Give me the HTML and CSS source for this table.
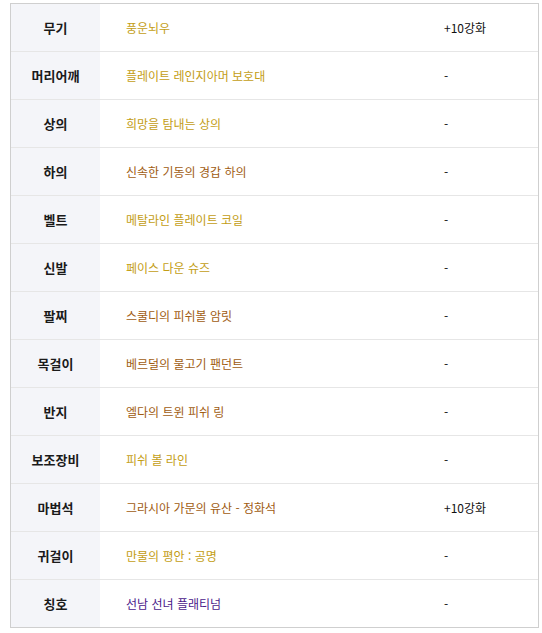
FILE: index.html
```html
<!DOCTYPE html>
<html lang="ko">
<head>
<meta charset="utf-8">
<link rel="stylesheet" href="styles.css">
</head>
<body>
<div class="equip">
  <div class="row"><div class="label">무기</div><div class="item gold">풍운뇌우</div><div class="extra">+10강화</div></div>
  <div class="row"><div class="label">머리어깨</div><div class="item gold">플레이트 레인지아머 보호대</div><div class="extra">-</div></div>
  <div class="row"><div class="label">상의</div><div class="item gold">희망을 탐내는 상의</div><div class="extra">-</div></div>
  <div class="row"><div class="label">하의</div><div class="item brown">신속한 기동의 경갑 하의</div><div class="extra">-</div></div>
  <div class="row"><div class="label">벨트</div><div class="item gold">메탈라인 플레이트 코일</div><div class="extra">-</div></div>
  <div class="row"><div class="label">신발</div><div class="item gold">페이스 다운 슈즈</div><div class="extra">-</div></div>
  <div class="row"><div class="label">팔찌</div><div class="item brown">스쿨디의 피쉬볼 암릿</div><div class="extra">-</div></div>
  <div class="row"><div class="label">목걸이</div><div class="item brown">베르덜의 물고기 팬던트</div><div class="extra">-</div></div>
  <div class="row"><div class="label">반지</div><div class="item brown">엘다의 트윈 피쉬 링</div><div class="extra">-</div></div>
  <div class="row"><div class="label">보조장비</div><div class="item gold">피쉬 볼 라인</div><div class="extra">-</div></div>
  <div class="row"><div class="label">마법석</div><div class="item brown">그라시아 가문의 유산 - 정화석</div><div class="extra">+10강화</div></div>
  <div class="row"><div class="label">귀걸이</div><div class="item gold">만물의 평안 : 공명</div><div class="extra">-</div></div>
  <div class="row"><div class="label">칭호</div><div class="item purple">선남 선녀 플래티넘</div><div class="extra">-</div></div>
</div>
</body>
</html>
```
FILE: styles.css
```css
html, body {
  margin: 0;
  padding: 0;
  background: #ffffff;
}
body {
  padding: 3px 0 0 10px;
  font-family: "Noto Sans CJK KR", "Noto Sans", sans-serif;
  font-size: 12px;
  color: #111111;
}
.equip {
  width: 527px;
  border: 1px solid #cfcfcf;
}
.row {
  display: grid;
  grid-template-columns: 89px 1fr 94px;
  height: 47px;
  border-top: 1px solid #e6e6e6;
  align-items: stretch;
}
.row:first-child {
  border-top: none;
}
.label {
  background: #f4f5f9;
  font-weight: bold;
  font-size: 13px;
  display: flex;
  align-items: center;
  justify-content: center;
  color: #1a1a1a;
}
.item {
  display: flex;
  align-items: center;
  padding-left: 26px;
}
.extra {
  display: flex;
  align-items: center;
  color: #111111;
}
.gold { color: #c39d14; }
.brown { color: #a05c12; }
.purple { color: #4a188a; }
```
